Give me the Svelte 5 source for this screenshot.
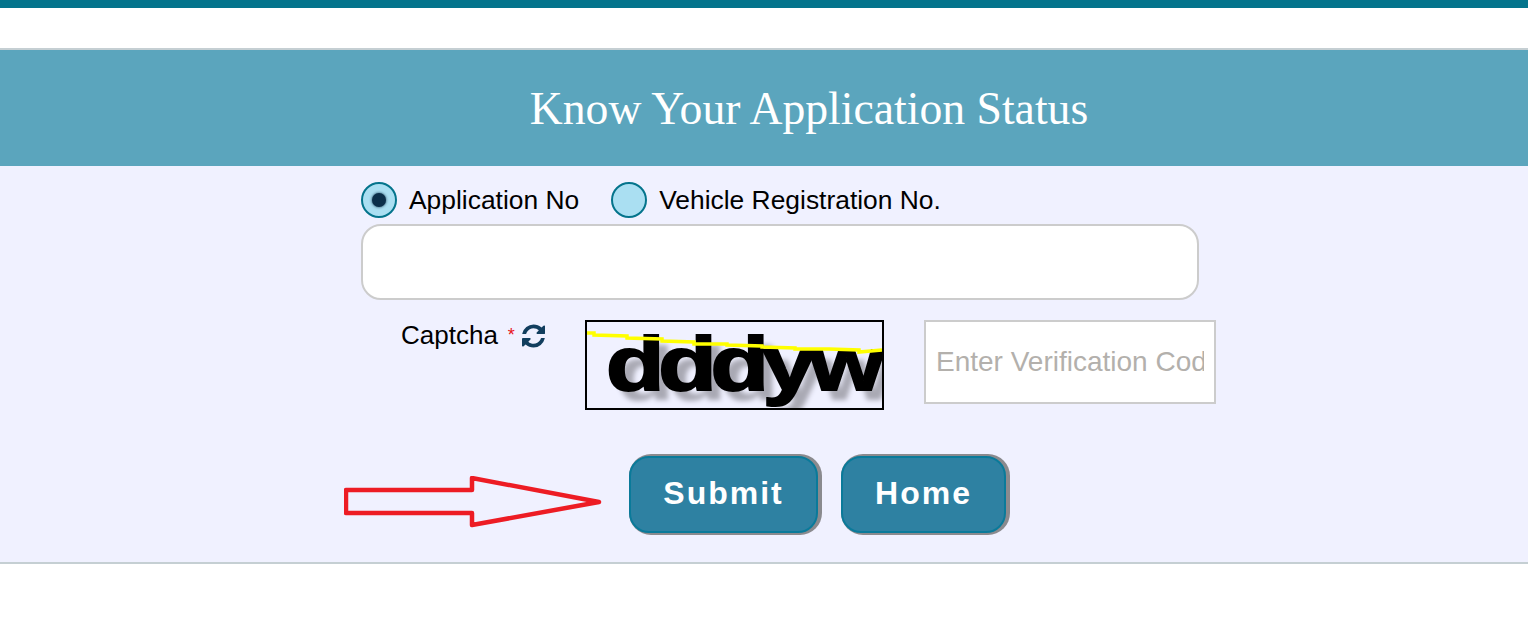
<script>
  let mode = "application";
</script>

<div class="page">
  <div class="topbar"></div>
  <div class="spacer"></div>

  <header class="banner">
    <h1>Know Your Application Status</h1>
  </header>

  <main class="panel">
    <form class="form" on:submit|preventDefault>
      <div class="radios">
        <label class="radio">
          <input type="radio" bind:group={mode} value="application" />
          <span class="dot"></span>
          Application No
        </label>
        <label class="radio">
          <input type="radio" bind:group={mode} value="vehicle" />
          <span class="dot"></span>
          Vehicle Registration No.
        </label>
      </div>

      <input class="number" type="text" aria-label="Application number" />

      <div class="captcha-row">
        <div class="captcha-label">
          Captcha <span class="req">*</span>
          <svg class="refresh" viewBox="0 0 1536 1536" width="24" height="24" fill="currentColor">
            <path d="M1511 928q0 5-1 7-64 268-268 434.500T764 1536q-146 0-282.500-55T238 1324l-129 129q-19 19-45 19t-45-19-19-45V960q0-26 19-45t45-19h448q26 0 45 19t19 45-19 45L420 1142q71 66 161 102t187 36q134 0 250-65t186-179q11-17 53-117 8-23 30-23h192q13 0 22.500 9.500t9.500 22.500zm25-800v448q0 26-19 45t-45 19h-448q-26 0-45-19t-19-45 19-45l138-138q-148-137-349-137-134 0-250 65T332 500q-11 17-53 117-8 23-30 23H50q-13 0-22.500-9.500T18 608v-7q65-268 270-434.500T768 0q146 0 284 55.500T1297 212l130-129q19-19 45-19t45 19 19 45z"/>
          </svg>
        </div>

        <div class="captcha-img">
          <span class="captcha-text">dddyw</span>
          <svg class="captcha-line" viewBox="0 0 295 86" width="295" height="86">
            <polyline points="0,11 7,11 7,13 40,14 40,16 75,17 75,19 107,20 107,22 140,22 140,23 175,24 175,25 208,26 208,27 242,27 272,28 272,30 295,28" fill="none" stroke="#ffff00" stroke-width="3.5" />
          </svg>
        </div>

        <input class="verify" type="text" placeholder="Enter Verification Code" />
      </div>

      <div class="actions">
        <button class="btn submit" type="submit">Submit</button>
        <button class="btn home" type="button">Home</button>
        <svg class="arrow" viewBox="0 0 262 54" width="262" height="54">
          <path d="M2 14H128V2L255 26 128 49V37H2Z" fill="none" stroke="#ed1c24" stroke-width="4.5" stroke-linejoin="round" />
        </svg>
      </div>
    </form>
  </main>
</div>

<style>
  :global(body) {
    margin: 0;
    background: #ffffff;
    font-family: "Liberation Sans", Arial, sans-serif;
  }

  .topbar {
    height: 8px;
    background: #04748c;
  }

  .spacer {
    height: 40px;
  }

  .banner {
    height: 116px;
    border-top: 2px solid #c5cfd3;
    background: #5ba5bd;
    display: flex;
    align-items: center;
    justify-content: center;
    padding-left: 90px;
  }

  h1 {
    margin: 0;
    color: #ffffff;
    font-family: "Liberation Serif", Georgia, serif;
    font-size: 45.7px;
    font-weight: 400;
  }

  .panel {
    height: 396px;
    background: #f0f1ff;
    border-bottom: 2px solid #c5cfd3;
    padding-left: 361px;
  }

  .form {
    width: 838px;
    padding-top: 16px;
  }

  .radios {
    display: flex;
    gap: 32px;
    height: 36px;
    margin-bottom: 6px;
  }

  .radio {
    display: flex;
    align-items: center;
    gap: 12px;
    font-size: 26.4px;
    color: #000000;
    cursor: pointer;
  }

  .radio input {
    display: none;
  }

  .dot {
    width: 36px;
    height: 36px;
    box-sizing: border-box;
    border: 2px solid #04748c;
    border-radius: 50%;
    background: #aadff2;
    display: flex;
    align-items: center;
    justify-content: center;
  }

  .radio input:checked + .dot::after {
    content: "";
    width: 14px;
    height: 14px;
    border-radius: 50%;
    background: #0b2f4a;
    box-shadow: 0 0 3px #0b2f4a;
  }

  .number {
    display: block;
    width: 100%;
    height: 76px;
    box-sizing: border-box;
    border: 2px solid #cccccc;
    border-radius: 20px;
    background: #ffffff;
    outline: none;
  }

  .captcha-row {
    display: flex;
    align-items: flex-start;
    margin-top: 20px;
    height: 90px;
    width: 855px;
  }

  .captcha-label {
    width: 184px;
    box-sizing: border-box;
    padding: 1px 0 0 40px;
    display: flex;
    align-items: center;
    gap: 8px;
    font-size: 26px;
    line-height: 29px;
    color: #000000;
    white-space: nowrap;
  }

  .req {
    color: #e8111a;
    font-size: 18px;
    margin: 0 -1px 0 2px;
  }

  .refresh {
    color: #123e5e;
  }

  .captcha-img {
    position: relative;
    width: 299px;
    height: 90px;
    box-sizing: border-box;
    border: 2px solid #000000;
    background: #f0f1ff;
    overflow: hidden;
    flex: none;
    margin-left: 40px;
  }

  .captcha-text {
    display: block;
    margin-left: 19px;
    font-size: 76px;
    line-height: 84px;
    font-weight: 700;
    letter-spacing: -5px;
    color: #000000;
    -webkit-text-stroke: 2px #000000;
    text-shadow: 8px 10px 5px #a9a9b4;
    white-space: nowrap;
    transform: scaleX(1.26);
    transform-origin: left center;
    filter: blur(0.6px);
  }

  .captcha-line {
    position: absolute;
    left: 0;
    top: 0;
  }

  .verify {
    flex: none;
    width: 292px;
    height: 84px;
    box-sizing: border-box;
    margin-left: 40px;
    padding: 0 10px;
    border: 2px solid #cccccc;
    background: #ffffff;
    font-family: inherit;
    font-size: 28px;
    outline: none;
  }

  .verify::placeholder {
    color: #b3b0ac;
    opacity: 1;
  }

  .actions {
    position: relative;
    display: flex;
    gap: 23px;
    margin-top: 46px;
    padding-left: 268px;
  }

  .btn {
    height: 77px;
    box-sizing: border-box;
    padding: 0 0 3px;
    border: 2px solid #0a7a9a;
    border-radius: 20px;
    background: #2e81a2;
    color: #ffffff;
    font-family: inherit;
    font-size: 32px;
    font-weight: 700;
    letter-spacing: 2px;
    box-shadow: 2px 0 0 2px #8a8a8e;
    cursor: pointer;
  }

  .submit {
    width: 189px;
  }

  .home {
    width: 165px;
  }

  .arrow {
    position: absolute;
    left: -17px;
    top: 20px;
  }
</style>
